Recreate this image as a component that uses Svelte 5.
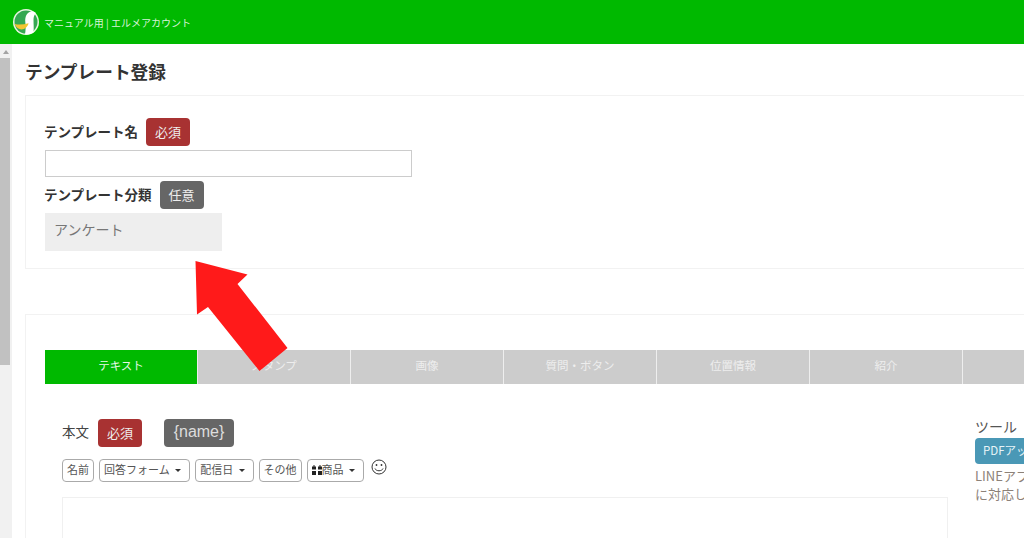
<script>
  // タブ一覧
  const tabs = ['テキスト', 'スタンプ', '画像', '質問・ボタン', '位置情報', '紹介', ''];
</script>

<div class="page">
  <header class="topbar">
    <svg class="logo" viewBox="0 0 26 26" width="26" height="26">
      <circle cx="13" cy="13" r="13" fill="#e8f5e0" />
      <circle cx="13" cy="13" r="11.500" fill="#35a852" />
      <path d="M12 25.300 C12.800 21 12.800 17 12.300 13 C11.800 8 14 3 18 2.500 C20 2.300 22 3 23 4 C21 6 20.500 8 20.500 11 C20.500 15 21 19 20.500 23.500 C18 25.200 15 25.600 12 25.300 Z" fill="#fff" />
      <path d="M1.500 15 C6 16 11 15.500 15.500 14.300 C15 17.500 12 20.500 8.500 20.500 C5.500 20.500 3 18 1.500 15 Z" fill="#f2c531" />
    </svg>
    <span class="account">マニュアル用 | エルメアカウント</span>
  </header>

  <div class="body">
    <div class="scrollbar">
      <div class="arrow-btn"><span class="up"></span></div>
      <div class="thumb"></div>
    </div>

    <main class="main">
      <h1>テンプレート登録</h1>

      <section class="card first">
        <div class="field-label">
          <b>テンプレート名</b>
          <span class="badge req">必須</span>
        </div>
        <input class="name-input" type="text" />
        <div class="field-label second">
          <b>テンプレート分類</b>
          <span class="badge opt">任意</span>
        </div>
        <div class="category">アンケート</div>
      </section>

      <section class="card editor-card">
        <div class="tabs">
          {#each tabs as tab, i}
            <div class="tab" class:active={i === 0}>{tab}</div>
          {/each}
        </div>

        <div class="columns">
          <div class="left">
            <div class="body-label">
              <span class="honbun">本文</span>
              <span class="badge req">必須</span>
              <span class="badge opt name-tag">&#123;name&#125;</span>
            </div>
            <div class="tools">
              <button class="tool">名前</button>
              <button class="tool">回答フォーム <i class="caret"></i></button>
              <button class="tool">配信日 <i class="caret"></i></button>
              <button class="tool">その他</button>
              <button class="tool">
                <svg viewBox="0 0 10 10" width="10" height="10">
                  <path d="M0 1.500h4v3H0zM6 1.500h4v3H6zM0 6h4v4H0zM6 6h4v4H6zM1.500 0h1v1.500h-1zM7.500 0h1v1.500h-1z" fill="#222" />
                </svg>商品 <i class="caret"></i>
              </button>
              <svg class="smile" viewBox="0 0 16 16" width="16" height="16" fill="none" stroke="#333" stroke-width="1">
                <circle cx="8" cy="8" r="7" />
                <circle cx="5.500" cy="6" r="0.900" fill="#333" stroke="none" />
                <circle cx="10.500" cy="6" r="0.900" fill="#333" stroke="none" />
                <path d="M4 9.500 C5 12.500 11 12.500 12 9.500" />
              </svg>
            </div>
            <div class="textbox"></div>
          </div>

          <aside class="right">
            <div class="tool-title">ツール</div>
            <button class="pdf">PDFアップロード</button>
            <p>LINEアプリのバージョン<br />に対応しています</p>
          </aside>
        </div>
      </section>
    </main>
  </div>

  <svg class="arrow" viewBox="0 0 1024 538" width="1024" height="538">
    <polygon points="195.500,261 247.500,274.500 237.500,284 287.500,348 259.500,371 208,307 197,314.500" fill="#ff1a1a" />
  </svg>
</div>

<style>
  :global(body) {
    margin: 0;
    background: #fff;
  }

  .page {
    position: relative;
    width: 1024px;
    height: 538px;
    overflow: hidden;
    font-family: "Noto Sans CJK JP", "Liberation Sans", sans-serif;
    color: #333;
  }

  .topbar {
    display: flex;
    align-items: center;
    gap: 5px;
    height: 44px;
    padding-left: 13px;
    background: #00b900;
  }

  .logo {
    flex: none;
  }

  .account {
    font-size: 10px;
    color: #d8f2d8;
  }

  .body {
    display: flex;
    height: 494px;
  }

  .scrollbar {
    flex: none;
    width: 12px;
    background: #f1f1f1;
  }

  .arrow-btn {
    display: flex;
    justify-content: center;
    height: 14px;
    padding-top: 6px;
    box-sizing: border-box;
  }

  .up {
    width: 0;
    height: 0;
    border-left: 3px solid transparent;
    border-right: 3px solid transparent;
    border-bottom: 4px solid #a3a3a3;
  }

  .thumb {
    width: 10px;
    height: 307px;
    background: #c1c1c1;
  }

  .main {
    flex: 1;
    min-width: 0;
    padding-left: 13px;
  }

  h1 {
    margin: 0;
    padding: 15px 0 0;
    height: 36px;
    font-size: 17.700px;
    line-height: 25px;
    font-weight: 700;
    color: #333;
  }

  .card {
    box-sizing: border-box;
    width: 1100px;
    border: 1px solid #f2f2f2;
    padding-left: 19px;
  }

  .first {
    height: 174px;
    padding-top: 22px;
  }

  .field-label {
    display: flex;
    align-items: center;
    gap: 8px;
    margin-left: -1px;
    font-size: 13.500px;
    height: 28px;
  }

  .field-label.second {
    margin-top: 4px;
  }

  .field-label b {
    margin-top: -3px;
    font-weight: 700;
    color: #333;
  }

  .badge {
    display: inline-flex;
    align-items: center;
    justify-content: center;
    box-sizing: border-box;
    width: 44px;
    height: 28px;
    padding-bottom: 2px;
    border-radius: 4px;
    font-size: 13px;
    color: #eee;
  }

  .req {
    background: #a83232;
  }

  .opt {
    background: #666;
  }

  .name-input {
    display: block;
    box-sizing: border-box;
    width: 367px;
    height: 27px;
    margin: 4px 0 0;
    border: 1px solid #ccc;
    background: #fff;
  }

  .category {
    box-sizing: border-box;
    width: 177px;
    height: 38px;
    margin-top: 4px;
    padding-left: 9px;
    background: #eee;
    font-size: 14px;
    line-height: 33px;
    color: #777;
  }

  .editor-card {
    height: 300px;
    margin-top: 45px;
    padding-top: 35px;
  }

  .tabs {
    display: flex;
  }

  .tab {
    flex: none;
    box-sizing: border-box;
    width: 153px;
    height: 34px;
    border-right: 1px solid #eee;
    background: #ccc;
    color: #eee;
    font-size: 11.500px;
    line-height: 31px;
    text-align: center;
  }

  .tab.active {
    background: #00b900;
    color: #e6f8e6;
  }

  .columns {
    display: flex;
  }

  .left {
    flex: none;
    width: 886px;
    margin-left: 17px;
    padding-top: 35px;
  }

  .body-label {
    display: flex;
    align-items: center;
    height: 28px;
    font-size: 13.500px;
  }

  .honbun {
    width: 36px;
    margin-top: -4px;
    color: #444;
  }

  .name-tag {
    width: 70px;
    margin-left: 22px;
    font-family: "Liberation Sans", sans-serif;
    font-size: 16px;
    color: #ddd;
  }

  .tools {
    display: flex;
    align-items: flex-start;
    gap: 5px;
    height: 38px;
    margin-top: 12px;
  }

  .tool {
    box-sizing: border-box;
    height: 23px;
    padding: 0 4px 3px;
    border: 1px solid #aaa;
    border-radius: 4px;
    background: #fff;
    font: inherit;
    font-size: 11px;
    color: #555;
    white-space: nowrap;
  }

  .tool svg {
    vertical-align: -1px;
  }

  .caret {
    display: inline-block;
    margin: 0 4px 0 3px;
    vertical-align: 2px;
    border-left: 3px solid transparent;
    border-right: 3px solid transparent;
    border-top: 3px solid #333;
  }

  .smile {
    margin: 0 0 0 2px;
  }

  .textbox {
    box-sizing: border-box;
    height: 60px;
    border: 1px solid #f0f0f0;
  }

  .right {
    margin-left: 27px;
    padding-top: 33px;
    white-space: nowrap;
  }

  .tool-title {
    height: 21px;
    font-size: 14px;
    line-height: 18px;
    color: #555;
  }

  .pdf {
    display: block;
    height: 26px;
    padding: 0 8px 2px;
    border: 0;
    border-radius: 4px;
    background: #4a98b6;
    color: #e8f4f8;
    font: inherit;
    font-size: 11.500px;
  }

  .right p {
    margin: 3px 0 0;
    font-size: 13px;
    line-height: 18px;
    color: #8c8178;
  }

  .arrow {
    position: absolute;
    top: 0;
    left: 0;
    pointer-events: none;
  }
</style>
